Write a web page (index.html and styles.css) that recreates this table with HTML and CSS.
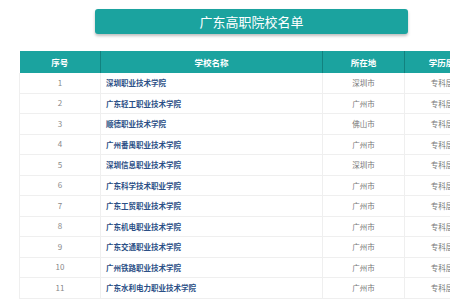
FILE: index.html
```html
<!DOCTYPE html>
<html lang="zh">
<head>
<meta charset="utf-8">
<link rel="stylesheet" href="styles.css">
</head>
<body>
<div class="page">
  <div class="title">广东高职院校名单</div>
  <table class="list">
    <colgroup>
      <col class="c-no"><col class="c-name"><col class="c-city"><col class="c-level">
    </colgroup>
    <thead>
      <tr><th>序号</th><th>学校名称</th><th>所在地</th><th>学历层次</th></tr>
    </thead>
    <tbody>
      <tr><td class="no">1</td><td class="name">深圳职业技术学院</td><td class="city">深圳市</td><td class="city">专科层次</td></tr>
      <tr><td class="no">2</td><td class="name">广东轻工职业技术学院</td><td class="city">广州市</td><td class="city">专科层次</td></tr>
      <tr><td class="no">3</td><td class="name">顺德职业技术学院</td><td class="city">佛山市</td><td class="city">专科层次</td></tr>
      <tr><td class="no">4</td><td class="name">广州番禺职业技术学院</td><td class="city">广州市</td><td class="city">专科层次</td></tr>
      <tr><td class="no">5</td><td class="name">深圳信息职业技术学院</td><td class="city">深圳市</td><td class="city">专科层次</td></tr>
      <tr><td class="no">6</td><td class="name">广东科学技术职业学院</td><td class="city">广州市</td><td class="city">专科层次</td></tr>
      <tr><td class="no">7</td><td class="name">广东工贸职业技术学院</td><td class="city">广州市</td><td class="city">专科层次</td></tr>
      <tr><td class="no">8</td><td class="name">广东机电职业技术学院</td><td class="city">广州市</td><td class="city">专科层次</td></tr>
      <tr><td class="no">9</td><td class="name">广东交通职业技术学院</td><td class="city">广州市</td><td class="city">专科层次</td></tr>
      <tr><td class="no">10</td><td class="name">广州铁路职业技术学院</td><td class="city">广州市</td><td class="city">专科层次</td></tr>
      <tr><td class="no">11</td><td class="name">广东水利电力职业技术学院</td><td class="city">广州市</td><td class="city">专科层次</td></tr>
    </tbody>
  </table>
</div>
</body>
</html>
```

FILE: styles.css
```css
html, body {
  margin: 0;
  padding: 0;
  background: #fff;
  overflow: hidden;
}
body {
  width: 450px;
  height: 300px;
  font-family: "Noto Sans CJK SC", "Noto Sans", sans-serif;
}
.page {
  padding-top: 9px;
  width: 520px;
}
.title {
  margin-left: 95px;
  width: 313px;
  height: 25px;
  line-height: 25px;
  background: #1ba39f;
  border-radius: 3px;
  box-shadow: 0 2px 3px rgba(0, 0, 0, 0.25);
  color: #fff;
  text-align: center;
  font-size: 13px;
}
.list {
  margin-top: 17px;
  margin-left: 19px;
  border-collapse: collapse;
  table-layout: fixed;
  width: 467px;
}
.c-no { width: 81px; }
.c-name { width: 222px; }
.c-city { width: 82px; }
.c-level { width: 82px; }
.list th {
  background: #1ba39f;
  color: #fff;
  font-size: 8.5px;
  font-weight: bold;
  height: 22px;
  padding: 0;
  border-left: 1px solid #12827f;
}
.list th:first-child { border-left: none; }
.list td {
  height: 19.5px;
  padding: 0;
  font-size: 7.5px;
  line-height: 1;
  border-bottom: 1px solid #efefef;
  border-left: 1px solid #efefef;
  color: #777;
  text-align: center;
}
.list td.name {
  text-align: left;
  padding-left: 5px;
  color: #2b4f86;
  font-weight: bold;
}
.list td.no { color: #888; font-size: 8px; }
```
